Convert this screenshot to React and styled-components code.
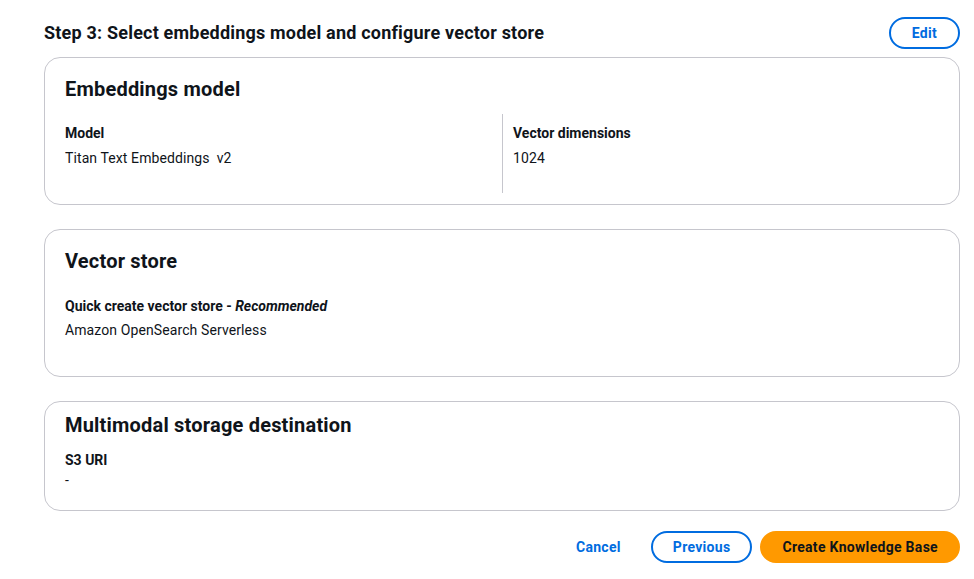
import React from "react";
import styled, { createGlobalStyle } from "styled-components";

const GlobalStyle = createGlobalStyle`
  html, body {
    margin: 0;
    padding: 0;
    background: #ffffff;
    font-family: Roboto, "Noto Sans", sans-serif;
    color: #0f141a;
  }
`;

const Page = styled.main`
  width: 974px;
  height: 579px;
  box-sizing: border-box;
  padding: 17px 14px 0 44px;
  overflow: hidden;
`;

const StepHeader = styled.header`
  display: flex;
  align-items: center;
  justify-content: space-between;
  height: 32px;
  margin-bottom: 8px;
`;

const StepTitle = styled.h2`
  margin: 0;
  font-size: 18px;
  line-height: 22px;
  font-weight: 700;
  letter-spacing: 0.2px;
`;

const Stack = styled.div`
  display: flex;
  flex-direction: column;
  gap: 24px;
`;

const Card = styled.section`
  border: 1px solid #c6c6cd;
  border-radius: 16px;
  padding: ${(p) => (p.$compact ? "11px 20px 20px" : "19px 20px 36px")};
  ${(p) => p.$columns && "padding-bottom: 11px;"}
`;

const CardTitle = styled.h3`
  margin: 0;
  font-size: 20px;
  line-height: 24px;
  font-weight: 700;
  letter-spacing: 0.2px;
`;

const Columns = styled.div`
  display: grid;
  grid-template-columns: 1fr 1fr;
  margin-top: 13px;
`;

const Column = styled.div`
  padding: 9px 0 25px ${(p) => (p.$divider ? "10px" : "0")};
  border-left: ${(p) => (p.$divider ? "1px solid #c6c6cd" : "none")};
`;

const Field = styled.div`
  margin-top: ${(p) => p.$top || 0}px;
`;

const Label = styled.div`
  font-size: 14px;
  line-height: 20px;
  font-weight: 700;
  margin-bottom: ${(p) => (p.$gap === undefined ? 5 : p.$gap)}px;

  em {
    font-style: italic;
  }
`;

const Value = styled.div`
  font-size: 14px;
  line-height: 20px;
  font-weight: 400;
  letter-spacing: 0.1px;
`;

const Version = styled.span`
  margin-left: 7px;
`;

const Footer = styled.footer`
  display: flex;
  justify-content: flex-end;
  align-items: center;
  gap: 8px;
  margin-top: 20px;
`;

const Button = styled.button`
  font-family: inherit;
  font-size: 14px;
  font-weight: 700;
  line-height: 20px;
  letter-spacing: 0.3px;
  height: 32px;
  box-sizing: border-box;
  border-radius: 20px;
  padding: 0 ${(p) => p.$pad || 20}px;
  cursor: pointer;
  border: 2px solid
    ${(p) =>
      p.$variant === "primary"
        ? "#ff9900"
        : p.$variant === "link"
        ? "transparent"
        : "#006ce0"};
  background: ${(p) => (p.$variant === "primary" ? "#ff9900" : "#ffffff")};
  color: ${(p) => (p.$variant === "primary" ? "#0f141a" : "#006ce0")};
`;

export default function App() {
  return (
    <>
      <GlobalStyle />
      <Page>
        <StepHeader>
          <StepTitle>Step 3: Select embeddings model and configure vector store</StepTitle>
          <Button $pad={21}>Edit</Button>
        </StepHeader>
        <Stack>
          <Card $columns>
            <CardTitle>Embeddings model</CardTitle>
            <Columns>
              <Column>
                <Label>Model</Label>
                <Value>
                  Titan Text Embeddings<Version>v2</Version>
                </Value>
              </Column>
              <Column $divider>
                <Label>Vector dimensions</Label>
                <Value>1024</Value>
              </Column>
            </Columns>
          </Card>

          <Card>
            <CardTitle>Vector store</CardTitle>
            <Field $top={23}>
              <Label $gap={4}>
                Quick create vector store - <em>Recommended</em>
              </Label>
              <Value>Amazon OpenSearch Serverless</Value>
            </Field>
          </Card>

          <Card $compact>
            <CardTitle>Multimodal storage destination</CardTitle>
            <Field $top={13}>
              <Label $gap={0}>S3 URI</Label>
              <Value>-</Value>
            </Field>
          </Card>
        </Stack>
        <Footer>
          <Button $variant="link">Cancel</Button>
          <Button>Previous</Button>
          <Button $variant="primary">Create Knowledge Base</Button>
        </Footer>
      </Page>
    </>
  );
}
